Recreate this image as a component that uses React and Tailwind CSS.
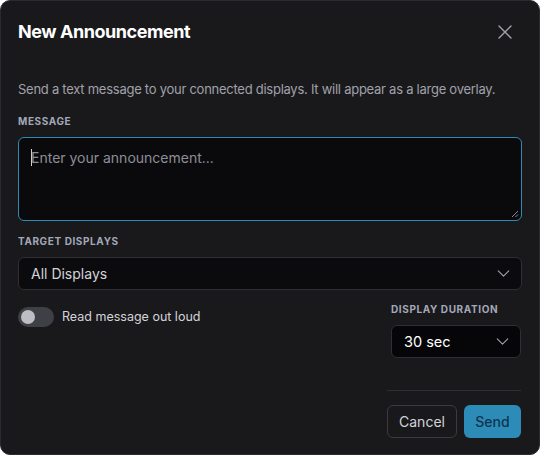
import { ChevronDown } from 'lucide-react';

function Label({ children }) {
  return (
    <div className="text-[10px] leading-4 font-bold tracking-[0.06em] uppercase text-[#a3a8b8]">
      {children}
    </div>
  );
}

function Select({ value, className = '', textClass = '' }) {
  return (
    <div
      className={`flex items-center justify-between h-[33px] pl-3 pr-[7px] rounded-md border border-[#2e2e34] bg-[#0b0b0e] ${className}`}
    >
      <span className={textClass}>{value}</span>
      <ChevronDown size={21} strokeWidth={1.25} className="text-[#a1a1aa]" />
    </div>
  );
}

export default function App() {
  return (
    <div
      className="w-[540px] h-[455px] overflow-hidden bg-[#19191c] border border-[#2a2a33] rounded-[10px] px-[17px] pt-[17px] pb-[16px] flex flex-col text-[#e4e4e7]"
      style={{ fontFamily: 'Inter, "Noto Sans", sans-serif' }}
    >
      <div className="flex items-center justify-between h-7">
        <h2 className="text-[18px] leading-7 font-bold tracking-[-0.025em] text-white">
          New Announcement
        </h2>
        <svg width="14" height="14" viewBox="0 0 14 14" className="mr-[10px]">
          <path d="M1 1L13 13M13 1L1 13" stroke="#a1a1aa" strokeWidth="1.4" strokeLinecap="round" />
        </svg>
      </div>

      <p className="mt-[33px] text-[13px] leading-5 tracking-[-0.02em] whitespace-nowrap text-[#a1a1aa]">
        Send a text message to your connected displays. It will appear as a large overlay.
      </p>

      <div className="mt-[14px]">
        <Label>Message</Label>
        <div className="mt-[8px] relative h-[84px] rounded-md border border-[#2f8bb5] bg-[#0a0a0d] px-3 pt-[7px]">
          <span className="text-[14px] leading-5 text-[#8e8e95]">
            <span className="inline-block w-px h-[17px] bg-[#d4d4d8] align-[-3px] mr-[-1px]" />
            Enter your announcement...
          </span>
          <svg
            className="absolute right-[2px] bottom-[2px]"
            width="8"
            height="8"
            viewBox="0 0 8 8"
          >
            <path d="M7 1L1 7M7 4.5L4.5 7" stroke="#8a8a90" strokeWidth="1" />
          </svg>
        </div>
      </div>

      <div className="mt-[12px]">
        <Label>Target Displays</Label>
        <Select
          value="All Displays"
          className="mt-[8px]"
          textClass="text-[14px] text-[#d4d4d8]"
        />
      </div>

      <div className="mt-[11px] flex justify-between">
        <div className="flex items-center gap-[8px] h-5 mt-[6px]">
          <div className="w-9 h-5 rounded-full bg-[#3f3f46] flex items-center px-[3px]">
            <div className="w-[14px] h-[14px] rounded-full bg-[#bdbdc4]" />
          </div>
          <span className="text-[12.5px] text-[#d4d4d8]">Read message out loud</span>
        </div>
        <div className="w-[130px] mr-[1px]">
          <Label>Display Duration</Label>
          <Select
            value="30 sec"
            className="mt-[8px] bg-[#060608]"
            textClass="text-[14.5px] text-white"
          />
        </div>
      </div>

      <div className="mt-auto self-end mr-[1px] border-t border-[#2e2e34] pt-[14px] flex gap-[7px]">
        <button className="h-[33px] w-[70px] rounded-md border border-[#3a3a40] text-[14px] text-[#d4d4d8]">
          Cancel
        </button>
        <button className="h-[33px] w-[57px] rounded-md bg-[#2d8bb8] text-[14px] font-medium text-[#0d3550]">
          Send
        </button>
      </div>
    </div>
  );
}
